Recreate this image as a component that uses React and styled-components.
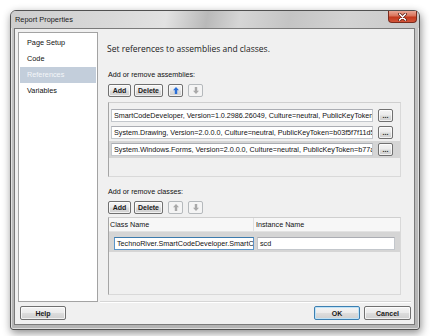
import React from 'react';
import styled, { createGlobalStyle, css } from 'styled-components';

const Global = createGlobalStyle`
  html, body { margin: 0; padding: 0; background: #ffffff; }
  body {
    width: 430px; height: 336px; overflow: hidden;
    font-family: "Liberation Sans", Arial, sans-serif;
    -webkit-font-smoothing: antialiased;
  }
`;

const Page = styled.div`
  padding: 10px 0 0 10px;
`;

const Window = styled.div`
  width: 410px;
  height: 320px;
  box-sizing: border-box;
  border: 1px solid #505050;
  border-radius: 6px 6px 3px 3px;
  background: linear-gradient(180deg, #c6c6c6 0%, #bcbcbc 60%, #b4b4b4 100%);
  box-shadow: 1px 3px 8px rgba(0, 0, 0, 0.45), inset 0 0 0 1px rgba(255,255,255,0.55);
  display: flex;
  flex-direction: column;
`;

const TitleBar = styled.div`
  height: 17px;
  flex: none;
  display: flex;
  align-items: flex-start;
  padding-left: 4px;
  border-radius: 5px 5px 0 0;
  background: linear-gradient(100deg, #cdcdcd 0%, #d9d9d9 25%, #e2e2e2 38%, #b9b9b9 48%, #d6d6d6 56%, #c4c4c4 68%, #d3d3d3 82%, #c9c9c9 100%);
`;

const Title = styled.span`
  font-size: 7.4px;
  line-height: 17px;
  color: #1a1a1a;
`;

const CloseButton = styled.div`
  margin-left: auto;
  margin-right: 2px;
  width: 29px;
  height: 12px;
  box-sizing: border-box;
  border: 1px solid #7a2b1d;
  border-top: none;
  border-radius: 0 0 4px 4px;
  background: linear-gradient(180deg, #e9a694 0%, #d9725a 45%, #c2381c 55%, #d2553a 100%);
  display: flex;
  align-items: center;
  justify-content: center;
`;

const Client = styled.div`
  flex: 1;
  margin: 0 4px 4px 3px;
  border: 1px solid #7a7a7a;
  background: #f0f0f0;
  display: flex;
  flex-direction: column;
`;

const TopRow = styled.div`
  flex: none;
  height: 273px;
  box-sizing: border-box;
  padding: 3px 3px 0 3px;
  display: flex;
`;

const Nav = styled.div`
  width: 80px;
  flex: none;
  box-sizing: border-box;
  border: 1px solid #a3a3a3;
  background: #ffffff;
  padding-top: 2px;
`;

const NavItem = styled.div`
  height: 16px;
  line-height: 16px;
  margin: 0 1px;
  padding-left: 7px;
  font-size: 7.3px;
  color: #111;
  ${(p) => p.$selected && css`
    background: #c3cedb;
    color: #f3f6f9;
  `}
`;

const Main = styled.div`
  flex: 1;
  margin-left: 2px;
  padding: 0 10px 0 8px;
  border-bottom: 1px solid #d6d6d6;
  box-shadow: 0 1px 0 #ffffff;
`;

const Heading = styled.div`
  margin: 10px 0 0 -1px;
  line-height: 14px;
  font-family: "Open Sans", "Noto Sans", sans-serif;
  font-size: 8.5px;
  color: #1c1c1c;
`;

const SectionLabel = styled.div`
  margin-top: ${(p) => p.$top}px;
  line-height: 10px;
  font-size: 7.2px;
  color: #111;
`;

const ButtonRow = styled.div`
  margin-top: 4px;
  display: flex;
  align-items: center;
`;

const PushButton = styled.div`
  width: ${(p) => p.$w}px;
  height: ${(p) => p.$h || 13}px;
  margin-left: ${(p) => p.$gap || 0}px;
  box-sizing: border-box;
  border: 1px solid ${(p) => (p.$default ? '#3c7fb1' : '#707070')};
  border-radius: 2px;
  background: linear-gradient(180deg, #f4f4f4 0%, #ebebeb 48%, #dddddd 52%, #cfcfcf 100%);
  box-shadow: inset 0 0 0 1px ${(p) => (p.$default ? '#bfe3f8' : 'rgba(255,255,255,0.7)')};
  display: flex;
  align-items: center;
  justify-content: center;
  font-size: 7px;
  font-weight: bold;
  color: #1a1a1a;
  ${(p) => p.$disabled && css`
    border-color: #b5b9bc;
    background: #f4f4f4;
    box-shadow: none;
  `}
`;

const ListBox = styled.div`
  margin-top: ${(p) => p.$top}px;
  height: ${(p) => p.$h}px;
  box-sizing: border-box;
  border: 1px solid #d9d9d9;
  border-left-color: #a5a5a5;
  border-top-color: #cfcfcf;
  display: flex;
  flex-direction: column;
`;

const AssemblyList = styled.div`
  padding-top: 4px;
`;

const AssemblyRow = styled.div`
  height: 17px;
  padding-left: 2px;
  display: flex;
  align-items: center;
  ${(p) => p.$selected && css`
    background: #d5d5d5;
  `}
`;

const TextBox = styled.div`
  width: ${(p) => p.$w}px;
  height: 13px;
  margin-right: ${(p) => p.$mr || 0}px;
  box-sizing: border-box;
  border: 1px solid ${(p) => (p.$focused ? '#5a94c8' : '#c3c7cc')};
  border-top-color: ${(p) => (p.$focused ? '#3d7bad' : '#abadb3')};
  background: #ffffff;
  padding: 0 2px;
  font-size: 7.2px;
  line-height: 11px;
  color: #111;
  white-space: nowrap;
  overflow: hidden;
`;

const HeaderRow = styled.div`
  height: 14px;
  flex: none;
  display: flex;
  background: #f7f7f7;
  border-bottom: 1px solid #e2e2e2;
  box-sizing: border-box;
`;

const HeaderCell = styled.div`
  width: ${(p) => (p.$w ? `${p.$w}px` : 'auto')};
  flex: ${(p) => (p.$w ? 'none' : '1')};
  padding-left: ${(p) => p.$pl}px;
  border-right: ${(p) => (p.$w ? '1px solid #e0e0e0' : 'none')};
  box-sizing: border-box;
  font-size: 7.2px;
  line-height: 14px;
  color: #111;
`;

const DataRow = styled.div`
  height: 20px;
  flex: none;
  box-sizing: border-box;
  padding: 5px 0 0 5px;
  display: flex;
  align-items: flex-start;
  background: #d5d5d5;
`;

const Footer = styled.div`
  flex: 1;
  display: flex;
  align-items: flex-start;
  padding: 4px 3px 0 5px;
`;

const Spacer = styled.div`
  flex: 1;
`;

const ArrowIcon = ({ down, color }) => (
  <svg width="6" height="7" viewBox="0 0 6 7" style={down ? { transform: 'rotate(180deg)' } : undefined}>
    <path d="M3 0 L6 3.2 H4.2 V7 H1.8 V3.2 H0 Z" fill={color} />
  </svg>
);

const CloseGlyph = () => (
  <svg width="9" height="8" viewBox="0 0 9 8">
    <path d="M1.5 1 L7.5 7 M7.5 1 L1.5 7" stroke="#5a1a10" strokeWidth="3" strokeLinecap="round" />
    <path d="M1.5 1 L7.5 7 M7.5 1 L1.5 7" stroke="#ffffff" strokeWidth="1.6" strokeLinecap="round" />
  </svg>
);

const assemblies = [
  'SmartCodeDeveloper, Version=1.0.2986.26049, Culture=neutral, PublicKeyToken=null',
  'System.Drawing, Version=2.0.0.0, Culture=neutral, PublicKeyToken=b03f5f7f11d50a3a',
  'System.Windows.Forms, Version=2.0.0.0, Culture=neutral, PublicKeyToken=b77a5c561934e089',
];

const navItems = ['Page Setup', 'Code', 'References', 'Variables'];

export default function App() {
  return (
    <Page>
      <Global />
      <Window>
        <TitleBar>
          <Title>Report Properties</Title>
          <CloseButton>
            <CloseGlyph />
          </CloseButton>
        </TitleBar>
        <Client>
          <TopRow>
            <Nav>
              {navItems.map((n) => (
                <NavItem key={n} $selected={n === 'References'}>{n}</NavItem>
              ))}
            </Nav>
            <Main>
              <Heading>Set references to assemblies and classes.</Heading>

              <SectionLabel $top={14}>Add or remove assemblies:</SectionLabel>
              <ButtonRow>
                <PushButton $w={23}>Add</PushButton>
                <PushButton $w={29} $gap={3}>Delete</PushButton>
                <PushButton $w={15} $gap={5}>
                  <ArrowIcon color="#2a6fd8" />
                </PushButton>
                <PushButton $w={15} $gap={5} $disabled>
                  <ArrowIcon down color="#a9a9a9" />
                </PushButton>
              </ButtonRow>
              <ListBox $top={5} $h={75}>
                <AssemblyList>
                  {assemblies.map((a, i) => (
                    <AssemblyRow key={a} $selected={i === 2}>
                      <TextBox $w={262} $mr={5}>{a}</TextBox>
                      <PushButton $w={15}>...</PushButton>
                    </AssemblyRow>
                  ))}
                </AssemblyList>
              </ListBox>

              <SectionLabel $top={10}>Add or remove classes:</SectionLabel>
              <ButtonRow>
                <PushButton $w={23}>Add</PushButton>
                <PushButton $w={29} $gap={3}>Delete</PushButton>
                <PushButton $w={15} $gap={5} $disabled>
                  <ArrowIcon color="#a9a9a9" />
                </PushButton>
                <PushButton $w={15} $gap={5} $disabled>
                  <ArrowIcon down color="#a9a9a9" />
                </PushButton>
              </ButtonRow>
              <ListBox $top={3} $h={78}>
                <HeaderRow>
                  <HeaderCell $w={145} $pl={1}>Class Name</HeaderCell>
                  <HeaderCell $pl={2}>Instance Name</HeaderCell>
                </HeaderRow>
                <DataRow>
                  <TextBox $w={140} $mr={3} $focused>TechnoRiver.SmartCodeDeveloper.SmartCodeDeveloper</TextBox>
                  <TextBox $w={138}>scd</TextBox>
                </DataRow>
              </ListBox>
            </Main>
          </TopRow>
          <Footer>
            <PushButton $w={46} $h={14}>Help</PushButton>
            <Spacer />
            <PushButton $w={46} $h={14} $default>OK</PushButton>
            <PushButton $w={47} $h={14} $gap={4}>Cancel</PushButton>
          </Footer>
        </Client>
      </Window>
    </Page>
  );
}
